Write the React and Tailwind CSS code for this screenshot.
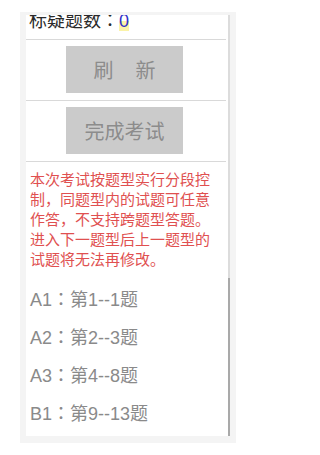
export default function App() {
  const items = ["A1：第1--1题", "A2：第2--3题", "A3：第4--8题", "B1：第9--13题"];
  return (
    <div className="w-[263px] h-[455px] bg-white pt-[12px] pl-[20px] overflow-hidden font-['Liberation_Sans','Noto_Sans_CJK_SC',sans-serif]">
      <div className="w-[216px] h-[431px] bg-[#f4f4f4] pt-[3px] pl-[6px]">
        <div className="w-[204px] h-[421px] flex">
          <div className="w-[202px] h-full bg-white overflow-hidden">
            <div className="mt-[-3px] pl-[3px] pb-[9px] text-[18px] leading-[18px] text-[#2a2a2a] font-['Liberation_Sans','Noto_Sans_CJK_TC',sans-serif]">
              标疑题数：
              <span className="text-[#3030c8] bg-[linear-gradient(to_bottom,transparent_50%,#fbf3a8_50%)]">0</span>
            </div>
            <div className="h-px bg-[#d9d9d9] mr-[2px]" />
            <div className="pt-[6px] pb-[7px] pl-[40px]">
              <div className="w-[117px] h-[47px] bg-[#cbcbcb] text-[#8c8c8c] text-[20px] flex items-center justify-center gap-[22px] pt-[2px]">
                <span>刷</span>
                <span>新</span>
              </div>
            </div>
            <div className="h-px bg-[#d9d9d9] mr-[2px]" />
            <div className="pt-[6px] pb-[7px] pl-[40px]">
              <div className="w-[117px] h-[47px] bg-[#cbcbcb] text-[#8c8c8c] text-[20px] flex items-center justify-center pt-[2px]">
                完成考试
              </div>
            </div>
            <div className="h-px bg-[#d9d9d9] mr-[2px]" />
            <div className="pt-[8px] pl-[4px] pr-[8px] text-[15px] leading-[20px] text-[#e05050]">
              本次考试按题型实行分段控制，同题型内的试题可任意作答，不支持跨题型答题。进入下一题型后上一题型的试题将无法再修改。
            </div>
            <div className="mt-[11px] pl-[4px] font-['Liberation_Sans','Noto_Sans_CJK_TC',sans-serif]">
              {items.map((t) => (
                <div key={t} className="h-[38px] leading-[38px] text-[18px] text-[#8a8a8a] whitespace-nowrap">
                  {t}
                </div>
              ))}
            </div>
          </div>
          <div className="w-[2px] h-full flex flex-col">
            <div className="h-[263px] bg-[#dcdcdc]" />
            <div className="flex-1 bg-[#a9a9a9]" />
          </div>
        </div>
      </div>
    </div>
  );
}
